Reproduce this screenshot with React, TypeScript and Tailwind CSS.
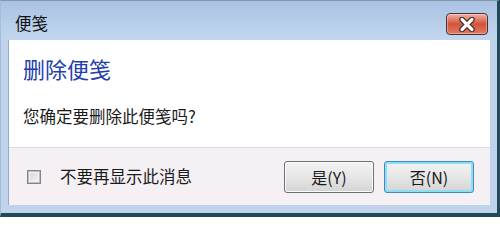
import React from 'react';

const font = { fontFamily: '"Noto Sans CJK SC", "Liberation Sans", sans-serif' };

const CloseButton: React.FC = () => (
  <div className="mt-[12px] w-[42px] h-[22px] rounded-[4px] border border-[#4b2e34] bg-gradient-to-b from-[#eeb0a4] via-[#d4523a] to-[#e27a62] flex items-center justify-center shadow-[inset_0_0_0_1px_rgba(255,255,255,0.35)]">
    <svg width="20" height="15" viewBox="0 0 20 15">
      <path d="M5 2.5 L15 12.5 M15 2.5 L5 12.5" stroke="#3a2a2a" strokeWidth="5.5" strokeLinecap="round" />
      <path d="M5 2.5 L15 12.5 M15 2.5 L5 12.5" stroke="#ffffff" strokeWidth="3.2" strokeLinecap="round" />
    </svg>
  </div>
);

const DialogButton: React.FC<{ label: string; focused?: boolean }> = ({ label, focused }) => (
  <button
    className={`w-[90px] h-[32px] rounded-[3px] text-[16px] text-[#1a1a1a] bg-gradient-to-b from-[#f3f3f3] via-[#e6e6e6] to-[#d4d4d4] ${
      focused
        ? 'border border-[#3c8cc4] shadow-[inset_0_0_0_2px_#8fdcf5]'
        : 'border border-[#707070] shadow-[inset_0_0_0_1px_#fbfbfb]'
    }`}
    style={font}
  >
    {label}
  </button>
);

export default function App() {
  return (
    <div
      className="w-[500px] h-[217px] flex flex-col bg-[#bfd3ec] border-t border-t-[#8497ad] border-l border-l-[#a7bcd6] border-r-[3px] border-r-[#24495a] border-b-[4px] border-b-[#1f4858] overflow-hidden"
      style={font}
    >
      <div className="h-[39px] flex items-start justify-between bg-gradient-to-b from-[#aac3e3] to-[#c2d6ee] pl-[14px] pr-[9px]">
        <span className="mt-[10px] text-[16.5px] leading-[24px] text-[#111111]">便笺</span>
        <CloseButton />
      </div>
      <div className="flex-1 flex flex-col ml-[7px] mr-[7px] mb-[8px] border-l border-[#95aac4]">
        <div className="h-[107px] bg-white pl-[14px] pt-[13px]">
          <div className="text-[22px] leading-[30px] text-[#2240ad]">删除便笺</div>
          <div className="mt-[21px] text-[16.5px] leading-[24px] text-[#1a1a1a]">您确定要删除此便笺吗?</div>
        </div>
        <div className="h-px bg-[#dcdcdc]" />
        <div className="flex-1 bg-[#f5f0f3] flex items-center pl-[18px] pr-[16px]">
          <div className="w-[14px] h-[14px] border border-[#858585] bg-gradient-to-br from-[#d2d2d2] to-[#f8f8f8] shadow-[inset_0_0_0_1px_#bdbdbd,inset_0_0_0_2px_#f2f2f2]" />
          <span className="ml-[19px] text-[16.5px] text-[#1a1a1a]">不要再显示此消息</span>
          <div className="ml-auto flex gap-[10px]">
            <DialogButton label="是(Y)" />
            <DialogButton label="否(N)" focused />
          </div>
        </div>
      </div>
    </div>
  );
}
